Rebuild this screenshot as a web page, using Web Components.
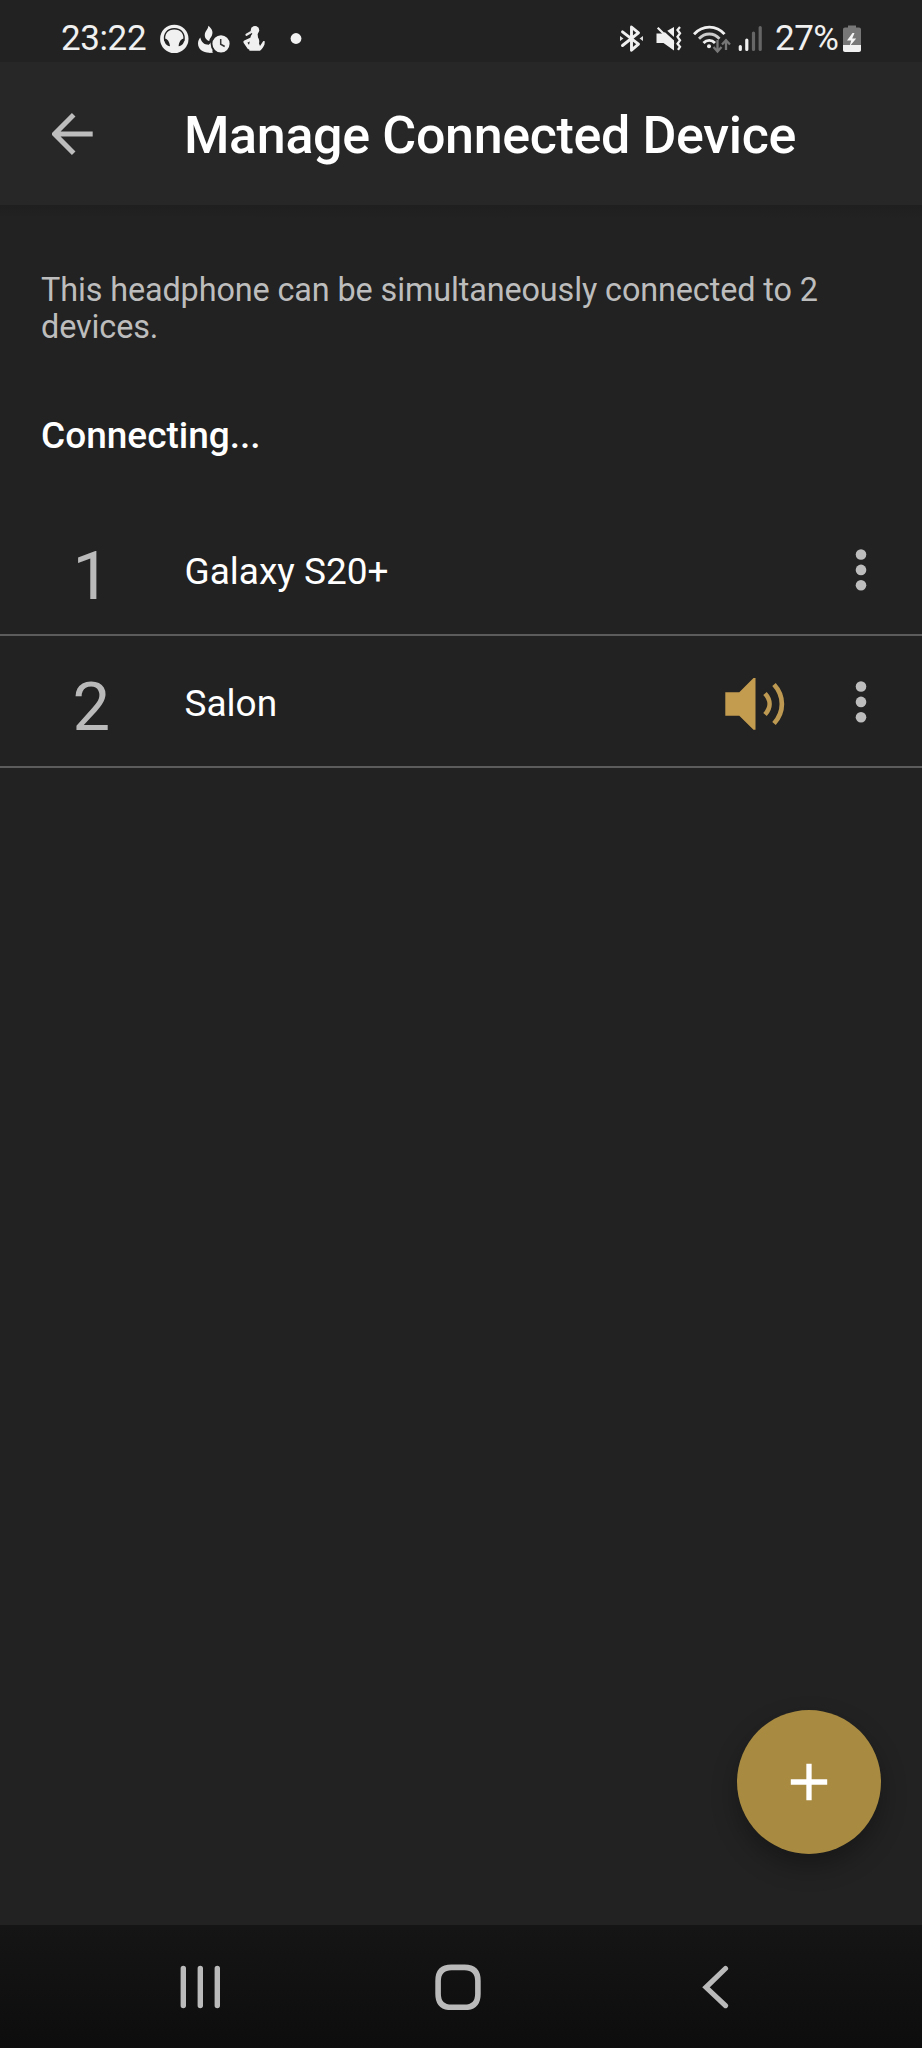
<!DOCTYPE html>
<html lang="en">
<head>
<meta charset="utf-8">
<title>Manage Connected Device</title>
<style>
	html,
	body {
		margin: 0;
		background: #222;
	}
	body {
		font-family: Roboto, "Liberation Sans", sans-serif;
		color: #fff;
	}
</style>
</head>
<body>
<device-screen>
	<status-bar slot="status" time="23:22" battery="27%"></status-bar>
	<app-header slot="header">Manage Connected Device</app-header>
	<p slot="intro">This headphone can be simultaneously connected to 2 devices.</p>
	<h2 slot="state">Connecting...</h2>
	<device-row number="1">Galaxy S20+</device-row>
	<device-row number="2" playing>Salon</device-row>
	<add-button slot="action"></add-button>
	<nav-bar slot="nav"></nav-bar>
</device-screen>

<script>
/**
 * Icons: [ width, height, viewBox, markup ]
 */
const ICONS = {
	headphones: [ 29, 62, '160 0 29 62', `
		<circle cx="174.300" cy="38.900" r="14.200" fill="#f0f0f0"/>
		<path d="M164.800 41C163.300 33.500 167.500 28.800 174.300 28.800s11 4.700 9.500 12.200" fill="none" stroke="#222" stroke-width="1.400"/>
		<path d="M164.300 38.500c3 0 5.200 3 5.700 7.800-3.500-.3-6-3.500-5.700-7.800zM184.300 38.500c-3 0-5.200 3-5.700 7.800 3.500-.3 6-3.500 5.700-7.800z" fill="#222"/>` ],
	flame: [ 32, 62, '198 0 32 62', `
		<path fill="#f0f0f0" d="M208.300 25.700c3.500 3 5.200 5.800 3.600 9.800-.9 2-2.600 3.600-2.600 5.500-2.600-.8-4.800-3-4.500-6.500.3-3.800 3.600-5.300 3.500-8.800zM200.300 37.600c1 4.800 4.200 7.600 9.300 7.200-.2 3 1.200 6 3.700 7.600-8.200 1.800-15.300-1.900-15.300-8.800 0-2.400.9-4.300 2.300-6z"/>
		<path fill="#f0f0f0" d="M209 44.500c2-1.500 3-3 3-6l3 2-3 12h-3z"/>
		<circle cx="221" cy="43.800" r="9.500" fill="#f0f0f0" stroke="#222" stroke-width="1.800"/>
		<path d="M220.700 39v5.200l4 2.300" fill="none" stroke="#333" stroke-width="1.500"/>` ],
	genie: [ 24, 62, '242 0 24 62', `
		<g fill="#f0f0f0">
			<circle cx="255" cy="30.200" r="4.200"/>
			<path d="M253 33h4.500l.5 4.500c1.300 2.200 1.500 4 1 6l1 2.500 3.300-5 1.500.3-.3 3.200c-1 2.600-2.600 4.500-4.500 6.300h-10.500l-1-3.500 2-9.300c0-2 1-3.500 2.500-5z"/>
		</g>
		<path d="M252.500 38.500l-7.500 3.500 4.500 6.500" fill="none" stroke="#f0f0f0" stroke-width="3.200" stroke-linejoin="round"/>
		<path d="M246.500 34.700l4.800-2.700" stroke="#e6e6e6" stroke-width="2.300" stroke-linecap="round"/>` ],
	dot: [ 12, 62, '290.500 0 12 62', '<circle cx="296.500" cy="38.500" r="5.400" fill="#f2f2f2"/>' ],
	bluetooth: [ 25, 62, '619 0 25 62', `
		<path d="M622.500 31.800l16 12.400-7 6V27l7 5.800-16 12.700" fill="none" stroke="#f0f0f0" stroke-width="2.900" stroke-linejoin="round" stroke-linecap="round"/>
		<path d="M620 36v5l3.500-2.500zM643 36v5l-3.500-2.500z" fill="#ddd"/>` ],
	vibrate: [ 26, 62, '656 0 26 62', `
		<path d="M656.500 33.500h6L674 27v23.500l-10.500-7.500h-7z" fill="#f0f0f0"/>
		<path d="M659 25l17.500 16" stroke="#222" stroke-width="2.500"/>
		<path d="M657.700 27.800l16 16" stroke="#f0f0f0" stroke-width="2.200"/>
		<path d="M680 27l-2.500 3 2.500 3.300-2.500 3.500 2.500 3.500-2.500 3.500 2.500 3-2 3" fill="none" stroke="#f0f0f0" stroke-width="2.300"/>` ],
	wifi: [ 38, 62, '693 0 38 62', `
		<g fill="none" stroke="#f0f0f0" stroke-width="2.800">
			<path d="M694 34.200c8.500-9.500 22.500-9.500 30.500 0"/>
			<path d="M699 38.700c5.800-6.300 14.800-6.300 20.500 0" stroke="#ccc"/>
			<path d="M703.500 43c3.300-3.600 8.200-3.600 11.500 0"/>
		</g>
		<circle cx="709" cy="46.300" r="2" fill="#f0f0f0"/>
		<path d="M717.500 40v11M713.500 47l4 4.500 4-4.500M726 50V40.500M722 44.500l4-4.300 4 4.300" fill="none" stroke="#777" stroke-width="2.300"/>` ],
	signal: [ 25, 62, '738 0 25 62', `
		<g stroke-width="3.200" stroke-linecap="round">
			<path d="M740.300 46.500v3M746.800 40v9.500" stroke="#f0f0f0"/>
			<path d="M753.500 33v16.500M760.200 27.500v22" stroke="#666"/>
		</g>` ],
	battery: [ 19, 62, '843 0 19 62', `
		<path d="M848 25.500h8v2h3c1.200 0 2 .8 2 2V45h-18V29.500c0-1.200.8-2 2-2h3z" fill="#777"/>
		<path d="M843 45h18v5c0 1.200-.8 2-2 2h-14c-1.200 0-2-.8-2-2z" fill="#f0f0f0"/>
		<path d="M852.500 33l-5.500 7.500h4.200l-1.700 6 6.700-8h-4l2.300-5.500z" fill="#f5f5f5"/>` ],
	back: [ 42, 42, '52 113 42 42', '<path d="M92.700 134H56M73.700 114.800L54.600 134l19.100 19.200" fill="none" stroke="#bdbdbd" stroke-width="5"/>' ],
	speaker: [ 60, 54, '725 677 60 54', `
		<path d="M725.300 692.300h14l14.200-14.300h2v51.700h-2l-14.200-14H725.300z" fill="#c49c50"/>
		<path d="M765 693.500c6 6.500 6 14.500 0 21M774 684.500c10.500 11.500 10.500 27.500 0 39" fill="none" stroke="#bd9951" stroke-width="4.700"/>` ],
	more: [ 12, 44, '854.500 548.500 12 44', '<g fill="#bdbdbd"><circle cx="860.500" cy="555" r="5.300"/><circle cx="860.500" cy="570.400" r="5.300"/><circle cx="860.500" cy="585.800" r="5.300"/></g>' ],
	plus: [ 38, 38, '0 0 38 38', '<path d="M.8 19h36.400M19 .8v36.400" stroke="#fff" stroke-width="5.300"/>' ],
	recents: [ 42, 46, '180 1964 42 46', '<path d="M183.300 1968.500v37M200.300 1968.500v37M217.300 1968.500v37" stroke="#bababa" stroke-width="5.400" stroke-linecap="round"/>' ],
	home: [ 46, 46, '435 1964 46 46', '<path d="M451.500 1967.400h13q13.400 0 13.400 13.400v13.200q0 13.400-13.400 13.400h-13q-13.400 0-13.400-13.400v-13.200q0-13.400 13.400-13.400z" fill="none" stroke="#bababa" stroke-width="5.600"/>' ],
	previous: [ 27, 46, '702 1964 27 46', '<path d="M725.500 1968.500L706 1987.300l19.500 18.300" fill="none" stroke="#bababa" stroke-width="5.200" stroke-linecap="round"/>' ],
};

function attach( element, markup ) {
	const template = document.createElement( 'template' );
	template.innerHTML = markup;
	element.attachShadow( { mode: 'open' } );
	element.shadowRoot.appendChild( template.content.cloneNode( true ) );
}

class UiIcon extends HTMLElement {
	connectedCallback() {
		const [ width, height, box, shapes ] = ICONS[ this.getAttribute( 'name' ) ];
		attach( this, `
			<style>
				:host {
					display: block;
					flex: none;
				}
				svg {
					display: block;
				}
			</style>
			<svg width="${ width }" height="${ height }" viewBox="${ box }" aria-hidden="true">${ shapes }</svg>
		` );
	}
}

class DeviceScreen extends HTMLElement {
	connectedCallback() {
		attach( this, `
			<style>
				:host {
					position: relative;
					display: flex;
					flex-direction: column;
					width: 922px;
					height: 2048px;
					overflow: hidden;
					background: #222;
				}
				main {
					flex: 1;
					background: linear-gradient(#1f1f1f, #222 14px);
				}
				::slotted(p) {
					margin: 0;
					padding: 67px 80px 0 41px;
					font-size: 32.4px;
					line-height: 37px;
					letter-spacing: -0.12px;
					color: #bdbdbd;
				}
				::slotted(h2) {
					margin: 0;
					padding: 68px 41px 46.5px;
					font-size: 37px;
					font-weight: 500;
					line-height: 44px;
				}
				.action {
					position: absolute;
					right: 41px;
					bottom: 194px;
				}
			</style>
			<slot name="status"></slot>
			<slot name="header"></slot>
			<main>
				<slot name="intro"></slot>
				<slot name="state"></slot>
				<slot></slot>
			</main>
			<div class="action"><slot name="action"></slot></div>
			<slot name="nav"></slot>
		` );
	}
}

class StatusBar extends HTMLElement {
	connectedCallback() {
		attach( this, `
			<style>
				:host {
					display: flex;
					justify-content: space-between;
					height: 62px;
					padding: 0 60px 0 61px;
					box-sizing: border-box;
					color: #f0f0f0;
					font-size: 35px;
					line-height: 77px;
				}
				.group {
					display: flex;
				}
				.time {
					width: 99px;
					letter-spacing: -0.4px;
				}
				.level {
					width: 68px;
					margin-left: 12px;
					letter-spacing: -0.5px;
				}
			</style>
			<div class="group">
				<span class="time">${ this.getAttribute( 'time' ) }</span>
				<ui-icon name="headphones"></ui-icon>
				<ui-icon name="flame" style="margin-left: 9px"></ui-icon>
				<ui-icon name="genie" style="margin-left: 12px"></ui-icon>
				<ui-icon name="dot" style="margin-left: 24px"></ui-icon>
			</div>
			<div class="group">
				<ui-icon name="bluetooth"></ui-icon>
				<ui-icon name="vibrate" style="margin-left: 12px"></ui-icon>
				<ui-icon name="wifi" style="margin-left: 11px"></ui-icon>
				<ui-icon name="signal" style="margin-left: 7px"></ui-icon>
				<span class="level">${ this.getAttribute( 'battery' ) }</span>
				<ui-icon name="battery"></ui-icon>
			</div>
		` );
	}
}

class AppHeader extends HTMLElement {
	connectedCallback() {
		attach( this, `
			<style>
				:host {
					display: flex;
					align-items: center;
					height: 143px;
					padding-left: 52px;
					background: #272727;
				}
				h1 {
					margin: 5px 0 0 90px;
					font-size: 52px;
					font-weight: 500;
					line-height: 62px;
					letter-spacing: -0.35px;
					white-space: nowrap;
				}
			</style>
			<ui-icon name="back"></ui-icon>
			<h1><slot></slot></h1>
		` );
	}
}

class DeviceRow extends HTMLElement {
	connectedCallback() {
		const playing = this.hasAttribute( 'playing' );
		attach( this, `
			<style>
				:host {
					display: flex;
					align-items: center;
					height: 129.5px;
					padding: 0 55.5px 0 0;
					border-bottom: 2px solid #5c5c5c;
				}
				.number {
					width: 112px;
					padding: 13px 0 0 72.5px;
					font-size: 67px;
					line-height: 76px;
					color: #bababa;
				}
				.name {
					flex: 1;
					padding-top: 6px;
					font-size: 37px;
					line-height: 44px;
				}
				[name="speaker"] {
					margin: 6px 69.5px 0 0;
				}
				[name="more"] {
					margin-top: 2px;
				}
			</style>
			<span class="number">${ this.getAttribute( 'number' ) }</span>
			<span class="name"><slot></slot></span>
			${ playing ? '<ui-icon name="speaker"></ui-icon>' : '' }
			<ui-icon name="more"></ui-icon>
		` );
	}
}

class AddButton extends HTMLElement {
	connectedCallback() {
		attach( this, `
			<style>
				:host {
					display: flex;
					align-items: center;
					justify-content: center;
					width: 144px;
					height: 144px;
					border-radius: 50%;
					background: #a88b41;
					box-shadow: 0 12px 26px rgba(0, 0, 0, .3);
				}
			</style>
			<ui-icon name="plus"></ui-icon>
		` );
	}
}

class NavBar extends HTMLElement {
	connectedCallback() {
		attach( this, `
			<style>
				:host {
					display: flex;
					align-items: center;
					justify-content: space-between;
					height: 123px;
					padding: 1px 193px 0 180px;
					box-sizing: border-box;
					background: linear-gradient(#151515, #111 50%, #0d0d0d);
				}
				[name="home"] {
					margin-right: 8px;
				}
			</style>
			<ui-icon name="recents"></ui-icon>
			<ui-icon name="home"></ui-icon>
			<ui-icon name="previous"></ui-icon>
		` );
	}
}

customElements.define( 'ui-icon', UiIcon );
customElements.define( 'device-screen', DeviceScreen );
customElements.define( 'status-bar', StatusBar );
customElements.define( 'app-header', AppHeader );
customElements.define( 'device-row', DeviceRow );
customElements.define( 'add-button', AddButton );
customElements.define( 'nav-bar', NavBar );
</script>
</body>
</html>
